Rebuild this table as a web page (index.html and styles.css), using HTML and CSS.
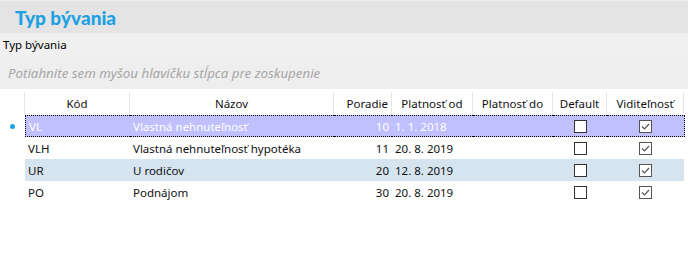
FILE: index.html
```html
<!DOCTYPE html>
<html>
<head>
<meta charset="utf-8">
<link rel="stylesheet" href="styles.css">
</head>
<body>
<div class="titlebar"><span class="title">Typ bývania</span></div>
<div class="label">Typ bývania</div>
<div class="grouppanel">Potiahnite sem myšou hlavičku stĺpca pre zoskupenie</div>
<div class="grid">
  <div class="row head">
    <div class="c ind"></div>
    <div class="c kod">Kód</div>
    <div class="c naz">Názov</div>
    <div class="c por">Poradie</div>
    <div class="c od">Platnosť od</div>
    <div class="c do">Platnosť do</div>
    <div class="c def">Default</div>
    <div class="c vid">Viditeľnosť</div>
  </div>
  <div class="row sel">
    <div class="c ind"><span class="dot"></span></div>
    <div class="c kod">VL</div>
    <div class="c naz">Vlastná nehnuteľnosť</div>
    <div class="c por num">10</div>
    <div class="c od">1. 1. 2018</div>
    <div class="c do"></div>
    <div class="c def"><span class="cb"></span></div>
    <div class="c vid"><span class="cb on"><svg width="13" height="13" viewBox="0 0 13 13"><path d="M3 6.5 L5.5 9 L10 4" fill="none" stroke="#555" stroke-width="1.2"/></svg></span></div>
  </div>
  <div class="row">
    <div class="c ind"></div>
    <div class="c kod">VLH</div>
    <div class="c naz">Vlastná nehnuteľnosť hypotéka</div>
    <div class="c por num">11</div>
    <div class="c od">20. 8. 2019</div>
    <div class="c do"></div>
    <div class="c def"><span class="cb"></span></div>
    <div class="c vid"><span class="cb on"><svg width="13" height="13" viewBox="0 0 13 13"><path d="M3 6.5 L5.5 9 L10 4" fill="none" stroke="#555" stroke-width="1.2"/></svg></span></div>
  </div>
  <div class="row alt">
    <div class="c ind"></div>
    <div class="c kod">UR</div>
    <div class="c naz">U rodičov</div>
    <div class="c por num">20</div>
    <div class="c od">12. 8. 2019</div>
    <div class="c do"></div>
    <div class="c def"><span class="cb"></span></div>
    <div class="c vid"><span class="cb on"><svg width="13" height="13" viewBox="0 0 13 13"><path d="M3 6.5 L5.5 9 L10 4" fill="none" stroke="#555" stroke-width="1.2"/></svg></span></div>
  </div>
  <div class="row">
    <div class="c ind"></div>
    <div class="c kod">PO</div>
    <div class="c naz">Podnájom</div>
    <div class="c por num">30</div>
    <div class="c od">20. 8. 2019</div>
    <div class="c do"></div>
    <div class="c def"><span class="cb"></span></div>
    <div class="c vid"><span class="cb on"><svg width="13" height="13" viewBox="0 0 13 13"><path d="M3 6.5 L5.5 9 L10 4" fill="none" stroke="#555" stroke-width="1.2"/></svg></span></div>
  </div>
</div>
</body>
</html>
```
FILE: styles.css
```css
html, body { margin: 0; padding: 0; background: #fff; }
body { font-family: "Noto Sans", "Open Sans", sans-serif; font-size: 11.5px; color: #111; width: 688px; height: 271px; overflow: hidden; }
.titlebar { height: 32px; background: #e4e4e4; border-top: 1px solid #efefef; display: flex; align-items: center; padding-left: 15px; }
.title { color: #1ba1e2; font-family: Lato, "Noto Sans", sans-serif; font-weight: 900; font-size: 19px; line-height: 1; }
.label { height: 24px; background: #f0f0f0; line-height: 24px; padding-left: 3px; font-size: 11.5px; color: #000; }
.grouppanel { height: 32px; background: #eeeeee; line-height: 32px; padding-left: 8px; font-style: italic; font-size: 13.3px; color: #a6a6a6; }
.grid { margin-top: 3px; }
.row { display: flex; height: 22px; align-items: stretch; }
.row .c { box-sizing: border-box; display: flex; align-items: center; padding: 0 3px; white-space: nowrap; overflow: hidden; }
.head { height: 23px; }
.head .c { justify-content: center; border-right: 1px solid #e6e6e6; }
.ind { width: 25px; justify-content: center; }
.kod { width: 105px; }
.naz { width: 204px; }
.por { width: 58px; justify-content: flex-end; }
.od { width: 81px; }
.do { width: 80px; }
.def { width: 54px; justify-content: center; }
.vid { width: 77px; justify-content: center; }
.head .por { justify-content: flex-end; }
.sel { color: #fff; }
.sel .c:not(.ind) { background: #c0c0ff; border-top: 1px dotted #000; border-bottom: 1px dotted #000; }
.sel .kod { border-left: 1px dotted #000; }
.sel .vid { border-right: 1px dotted #000; width: 78px; }
.alt .c:not(.ind) { background: #d6e4f0; }
.dot { width: 5px; height: 5px; border-radius: 50%; background: #1ba1e2; }
.cb { width: 11px; height: 11px; border: 1px solid #333; background: #fff; display: block; position: relative; }
.cb.on { border-color: #555; }
.cb svg { position: absolute; left: -1px; top: -1px; }
```
